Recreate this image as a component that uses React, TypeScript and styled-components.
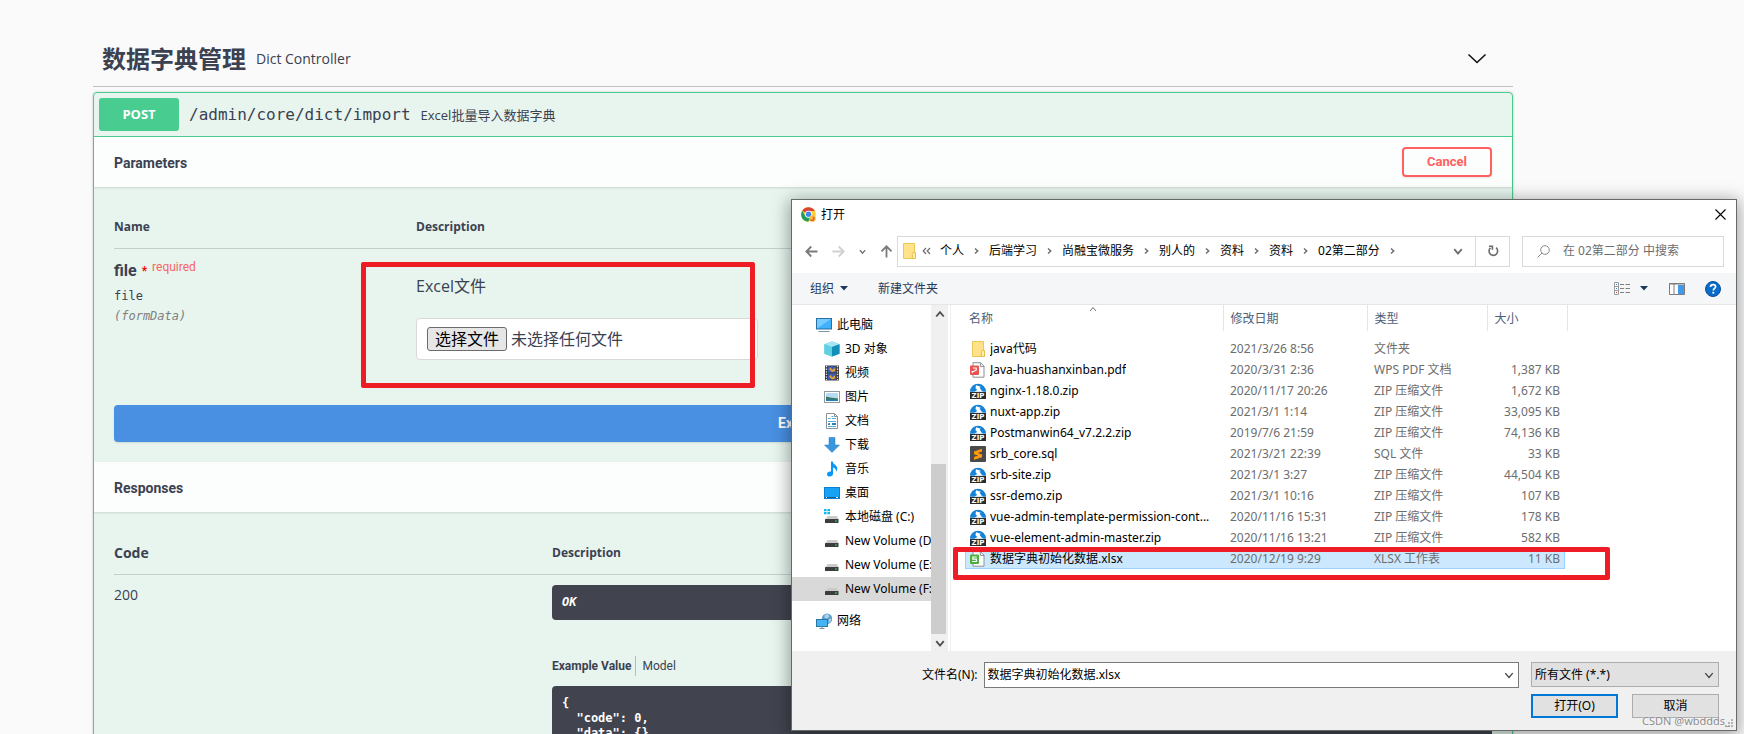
import React from "react";
import styled, { createGlobalStyle, css } from "styled-components";

const sans = '"Open Sans", "Noto Sans CJK SC", sans-serif';
const heading = 'Roboto, "Noto Sans CJK SC", sans-serif';
const mono = '"DejaVu Sans Mono", monospace';
const system = '"Noto Sans", "Noto Sans CJK SC", sans-serif';

const GlobalStyle = createGlobalStyle`
  *, *::before, *::after { box-sizing: border-box; }
  body { margin: 0; background: #fafafa; }
  button, input, select { font: inherit; color: inherit; margin: 0; padding: 0; }
  button { cursor: pointer; }
  a { color: inherit; text-decoration: none; }
  h2, h3, h4, p, pre, ul { margin: 0; padding: 0; }
  ul { list-style: none; }
  svg { display: block; flex: none; }
  table { border-collapse: collapse; table-layout: fixed; }
  th, td { padding: 0; text-align: left; vertical-align: top; }
`;

/* ---------- API documentation page ---------- */

const Screen = styled.div`
  position: relative;
  height: 100vh;
  overflow: hidden;
  background: #fafafa;
  color: #3b4151;
  font-family: ${sans};
`;

const Page = styled.main`
  position: relative;
  max-width: 1513px;
  padding: 32px 0 0 93px;
`;

const TagHeader = styled.header`
  display: flex;
  align-items: center;
  gap: 10px;
  height: 55px;
  padding: 0 26px 0 9px;
  border-bottom: 1px solid #bfc0c4;
`;

const TagTitle = styled.h2`
  font-size: 24px;
  line-height: 36px;
  font-weight: 700;
`;

const TagText = styled.p`
  flex: 1;
  font-size: 14px;
  line-height: 20px;
`;

const PlainButton = styled.button`
  display: flex;
  align-items: center;
  justify-content: center;
  border: 0;
  background: none;
`;

const Operation = styled.section`
  margin-top: 5px;
  border: 1px solid #49cc90;
  border-radius: 4px;
  background: #e7f5ee;
  box-shadow: 0 0 3px rgba(0, 0, 0, 0.19);
`;

const Summary = styled.div`
  display: flex;
  align-items: center;
  height: 44px;
  padding: 0 5px;
  border-bottom: 1px solid #49cc90;
`;

const Method = styled.span`
  width: 80px;
  border-radius: 3px;
  background: #49cc90;
  color: #fff;
  font: 700 13px/33px ${sans};
  text-align: center;
`;

const Path = styled.span`
  padding: 0 10px;
  font: 400 16px/24px ${mono};
`;

const SummaryText = styled.span`
  font-size: 13px;
  line-height: 20px;
`;

const Band = styled.div`
  display: flex;
  align-items: center;
  justify-content: space-between;
  height: 50px;
  padding: 0 20px;
  background: #fbfefc;
  box-shadow: 0 1px 2px rgba(0, 0, 0, 0.13);
`;

const BandTitle = styled.h4`
  padding-top: 2px;
  font: 700 14px/20px ${heading};
`;

const CancelButton = styled.button`
  width: 90px;
  height: 30px;
  border: 2px solid #ff6060;
  border-radius: 4px;
  background: transparent;
  box-shadow: 0 1px 2px rgba(0, 0, 0, 0.1);
  color: #ff6060;
  font: 700 13px/20px ${heading};
`;

const Body = styled.div`
  padding: 20px;
`;

const DocTable = styled.table`
  width: 100%;
`;

const DocTh = styled.th<{ $large?: boolean; $height?: number }>`
  height: ${(p) => p.$height ?? 41}px;
  border-bottom: 1px solid #c2d0cc;
  vertical-align: middle;
  font-size: ${(p) => (p.$large ? 14 : 12)}px;
  line-height: 20px;
`;

const DocTd = styled.td`
  padding-top: 10px;
`;

const ParamName = styled.div`
  display: flex;
  margin-bottom: 3px;
  font: 700 16px/24px ${heading};
`;

const Required = styled.span`
  margin-left: 5px;
  color: #ff0000;
  font: 700 12px/24px ${heading};
`;

const RequiredLabel = styled.sup`
  margin-left: 5px;
  color: #f76565;
  font: 400 12px/16px ${heading};
`;

const ParamType = styled.div<{ $muted?: boolean }>`
  font: ${(p) => (p.$muted ? "italic 400" : "400")} 12px/20px ${mono};
  color: ${(p) => (p.$muted ? "#808080" : "inherit")};
`;

const ParamText = styled.p`
  padding-top: 15px;
  font-size: 16px;
  line-height: 24px;
`;

const FileField = styled.div`
  display: flex;
  align-items: center;
  gap: 4px;
  width: 342px;
  height: 42px;
  margin: 20px 0 45px;
  padding: 0 10px;
  border: 1px solid #d9d9d9;
  border-radius: 4px;
  background: #fff;
  font-size: 16px;
  line-height: 22px;
`;

const HiddenFile = styled.input`
  position: absolute;
  width: 1px;
  height: 1px;
  opacity: 0;
`;

const FileButton = styled.label`
  padding: 0 7px;
  border: 1px solid #6b6b6b;
  border-radius: 3px;
  background: #e6e6e6;
  color: #000;
`;

const ExecuteButton = styled.button`
  display: block;
  width: 100%;
  height: 37px;
  border: 0;
  border-radius: 4px;
  background: #4990e2;
  box-shadow: 0 1px 2px rgba(0, 0, 0, 0.1);
  color: #fff;
  font: 700 14px/20px ${heading};
`;

const CodeBlock = styled.pre`
  padding: 10px;
  border-radius: 4px;
  background: #41444e;
  color: #fff;
  font: 700 12px/15px ${mono};
`;

const Tabs = styled.div`
  display: flex;
  margin: 36px 0 10px;
`;

const Tab = styled.button<{ $active?: boolean }>`
  height: 20px;
  padding: 0 4px 0 0;
  border: 0;
  background: none;
  font: ${(p) => (p.$active ? 700 : 400)} 12px/20px ${heading};

  & + & {
    padding: 0 0 0 6px;
    border-left: 1px solid #b4beb9;
  }
`;

/* Hand-placed red frames drawn over the content. */
const Marker = styled.div<{ $x: number; $y: number; $w: number; $h: number }>`
  position: absolute;
  left: ${(p) => p.$x}px;
  top: ${(p) => p.$y}px;
  width: ${(p) => p.$w}px;
  height: ${(p) => p.$h}px;
  border: 5px solid #ee1c25;
  border-radius: 2px;
  pointer-events: none;
`;

/* ---------- File dialog ---------- */

const Dialog = styled.div`
  position: absolute;
  top: 199px;
  left: 791px;
  right: 7px;
  display: flex;
  flex-direction: column;
  border: 1px solid #666a68;
  background: #fff;
  box-shadow: 0 3px 16px 2px rgba(0, 0, 0, 0.36);
  color: #000;
  font: 400 12px/18px ${system};
`;

const TitleBar = styled.div`
  display: flex;
  align-items: center;
  gap: 5px;
  height: 29px;
  padding: 0 10px 0 9px;
`;

const DialogTitle = styled.h3`
  flex: 1;
  font-size: 12px;
  line-height: 18px;
  font-weight: 400;
`;

const NavBar = styled.div`
  display: flex;
  align-items: center;
  height: 44px;
  padding: 0 12px 0 13px;
`;

const NavButtons = styled.div`
  display: flex;
  align-items: center;
  gap: 14px;
  width: 92px;
`;

const Address = styled.nav`
  display: flex;
  flex: 1;
  align-items: center;
  height: 31px;
  border: 1px solid #d9d9d9;
`;

const Crumbs = styled.div`
  display: flex;
  flex: 1;
  align-items: center;
  padding-left: 3px;
`;

const CrumbStart = styled.span`
  display: flex;
  align-items: center;
  gap: 5px;
  width: 39px;
`;

const Crumb = styled.a`
  display: flex;
  align-items: center;
  gap: 8px;
  padding-right: 9px;
`;

const AddressButton = styled(PlainButton)<{ $divided?: boolean }>`
  width: 34px;
  height: 29px;
  ${(p) => p.$divided && css`border-left: 1px solid #d9d9d9;`}
`;

const Search = styled.label`
  display: flex;
  align-items: center;
  gap: 13px;
  width: 202px;
  height: 31px;
  margin-left: 12px;
  padding-left: 14px;
  border: 1px solid #d9d9d9;
`;

const SearchInput = styled.input`
  width: 150px;
  border: 0;
  outline: 0;
  background: none;

  &::placeholder {
    color: #6d6d6d;
    opacity: 1;
  }
`;

const Toolbar = styled.div`
  display: flex;
  align-items: center;
  height: 32px;
  padding: 0 15px 0 18px;
  border-bottom: 1px solid #e4e6e9;
  background: #f5f6f7;
  color: #1e395b;
`;

const ToolButton = styled(PlainButton)<{ $after?: number }>`
  gap: 6px;
  margin-right: ${(p) => p.$after ?? 0}px;
`;

const Spacer = styled.span`
  flex: 1;
`;

const Panes = styled.div`
  display: flex;
  height: 346px;
`;

const Tree = styled.ul`
  width: 139px;
  padding-top: 8px;
`;

const TreeItem = styled.li<{ $selected?: boolean; $gap?: boolean }>`
  margin-top: ${(p) => (p.$gap ? 8 : 0)}px;
  background: ${(p) => (p.$selected ? "#d9d9d9" : "transparent")};
`;

const TreeLink = styled.a<{ $root?: boolean }>`
  display: flex;
  align-items: center;
  gap: 5px;
  height: 24px;
  padding-left: ${(p) => (p.$root ? 24 : 32)}px;
  overflow: hidden;
  white-space: nowrap;
`;

const ScrollBar = styled.div`
  display: flex;
  flex-direction: column;
  width: 17px;
  margin-right: 2px;
  background: #f0f0f0;
`;

const ScrollButton = styled(PlainButton)`
  height: 17px;
`;

const ScrollTrack = styled.div`
  display: flex;
  flex: 1;
  flex-direction: column;
  justify-content: flex-end;
`;

const ScrollThumb = styled.div`
  width: 15px;
  height: 170px;
  background: #cdcdcd;
`;

const Files = styled.div`
  position: relative;
  flex: 1;
  padding-left: 14px;
  border-left: 1px solid #f0f0f0;
`;

const FileTable = styled.table`
  width: 602px;
`;

const FileTh = styled.th`
  height: 26px;
  padding: 2px 0 0 7px;
  border-right: 1px solid #e5e5e5;
  color: #4c607a;
  font-weight: 400;
  vertical-align: middle;

  &:first-child {
    padding-left: 4px;
  }
`;

const SortMark = styled.span`
  position: absolute;
  top: 0;
  left: 138px;
`;

const FileTr = styled.tr<{ $selected?: boolean }>`
  height: 21px;

  ${(p) =>
    p.$selected &&
    css`
      td {
        background: #cce8ff;
        background-clip: padding-box;
        box-shadow: inset 0 -1px #99d1ff;
      }
      td:first-child {
        box-shadow: inset 1px -1px #99d1ff;
      }
      td:last-child {
        box-shadow: inset -1px -1px #99d1ff;
      }
    `}
`;

const FileTd = styled.td<{ $right?: boolean }>`
  padding-left: 7px;
  color: #6d6d6d;
  vertical-align: middle;
  white-space: nowrap;
  text-align: ${(p) => (p.$right ? "right" : "left")};

  &:first-child {
    padding-left: 5px;
    color: #000;
  }
  &:last-child {
    padding-right: 5px;
    border-right: 4px solid transparent;
  }
`;

const HeadGap = styled.tbody`
  height: 7px;
`;

const NameCell = styled.span`
  display: flex;
  align-items: center;
  gap: 4px;
  height: 20px;
  padding-right: 7px;
`;

const NameText = styled.span`
  overflow: hidden;
  text-overflow: ellipsis;
`;

const Footer = styled.div`
  display: grid;
  grid-template-columns: auto 1fr 188px;
  align-content: start;
  gap: 6px 0;
  height: 79px;
  padding: 11px 17px 0 130px;
  background: #f0f0f0;
`;

const FieldLabel = styled.label`
  align-self: center;
  padding-right: 6px;
`;

const Combo = styled.div`
  display: flex;
  height: 26px;
  margin-right: 12px;
  border: 1px solid #7a7a7a;
  background: #fff;
`;

const ComboInput = styled.input`
  flex: 1;
  padding-left: 3px;
  border: 0;
  outline: 0;
  background: none;
`;

const ComboButton = styled(PlainButton)`
  width: 18px;
`;

const SelectWrap = styled.div`
  display: grid;
  align-items: center;
  height: 25px;

  > * {
    grid-area: 1 / 1;
  }
  > svg {
    justify-self: end;
    margin-right: 5px;
    pointer-events: none;
  }
`;

const TypeSelect = styled.select`
  width: 100%;
  height: 25px;
  padding-left: 3px;
  border: 1px solid #adadad;
  border-radius: 0;
  background: #e1e1e1;
  appearance: none;
`;

const Actions = styled.div`
  grid-column: 3;
  display: grid;
  grid-template-columns: 1fr 1fr;
  gap: 14px;
`;

const DialogButton = styled.button<{ $primary?: boolean }>`
  height: 24px;
  border: ${(p) => (p.$primary ? "2px solid #0078d7" : "1px solid #adadad")};
  background: #e1e1e1;
`;

const Grip = styled.span`
  position: absolute;
  right: 2px;
  bottom: 2px;
`;

const Watermark = styled.span`
  position: absolute;
  right: 14px;
  bottom: 4px;
  color: #8c8c8c;
  font: 400 11px/18px ${system};
  text-shadow: 0 0 2px #fff;
`;

/* ---------- Icons ---------- */

type ChevronProps = { dir?: "up" | "down" | "right"; size?: number; color?: string; weight?: number };

const Chevron = ({ dir = "down", size = 8, color = "#6d6d6d", weight = 1.5 }: ChevronProps) => {
  const d = { up: "M1 6l3-3.5L7 6", down: "M1 2.5L4 6l3-3.5", right: "M3 1.5L5.7 4 3 6.5" }[dir];
  return (
    <svg width={size} height={size} viewBox="0 0 8 8" fill="none" stroke={color} strokeWidth={weight}>
      <path d={d} />
    </svg>
  );
};

const Arrow = ({ turn = 0, color = "#7a7a7a" }: { turn?: number; color?: string }) => (
  <svg width="13" height="13" viewBox="0 0 13 13" fill="none" stroke={color} strokeWidth="1.8">
    <path d="M12.5 6.5H1.5M6.3 1.5l-5 5 5 5" transform={`rotate(${turn} 6.5 6.5)`} />
  </svg>
);

const Triangle = () => (
  <svg width="8" height="5" viewBox="0 0 8 5">
    <path d="M0 0h8L4 4.5z" fill="#1e395b" />
  </svg>
);

const ChromeIcon = () => (
  <svg width="15" height="15" viewBox="0 0 16 16">
    <circle cx="8" cy="8" r="7.8" fill="#fbcf3a" />
    <path d="M8 8L1.3 4A7.8 7.8 0 0 1 14.8 4.2H8z" fill="#dc4437" />
    <path d="M1.3 4A7.8 7.8 0 0 0 7.4 15.8L11.2 9.8 8 8 4.7 9.8z" fill="#1a9f58" />
    <circle cx="8" cy="7.8" r="3.8" fill="#fff" />
    <circle cx="8" cy="7.8" r="2.9" fill="#4285f4" />
    <circle cx="12.4" cy="12.3" r="3.4" fill="#fbbf45" />
    <path d="M12.5 10.3l1.5 1.5-1 2.5-3-.5" fill="none" stroke="#d9632b" strokeWidth="1.5" />
  </svg>
);

const FolderIcon = () => (
  <svg width="16" height="16" viewBox="0 0 16 16">
    <path d="M2.5.5h11v15h-11z" fill="#ffe28a" stroke="#e9c955" />
    <path d="M12.3 9.5h2.2v6h-3.2v-4z" fill="#fff0b8" stroke="#e3bd3f" />
  </svg>
);

const PdfIcon = () => (
  <svg width="16" height="16" viewBox="0 0 16 16">
    <path d="M3 .7h7.5L14 4.2v11H3z" fill="#fff" stroke="#8b8f93" />
    <path d="M10.3.7v3.7H14" fill="none" stroke="#8b8f93" />
    <rect y="3.5" width="9" height="9.5" rx="1" fill="#ea5454" />
    <path d="M3 6h3.2v2.2L3.5 9.5H2.2v1.5" fill="none" stroke="#fff" strokeWidth="1.1" />
  </svg>
);

const ZipIcon = () => (
  <svg width="16" height="16" viewBox="0 0 16 16">
    <path d="M0 8.7a8 8 0 0 1 16 0z" fill="#1583d8" />
    <path d="M6 2.2l4.8 1.6-1.2 1 2.3 3.3 1.6.6H4.2L7.3 7 5.5 5.2z" fill="#fff" />
    <rect y="9" width="16" height="7" fill="#2b2b2b" />
    <text x="8" y="15" fill="#fff" fontSize="7" fontWeight="700" fontFamily="DejaVu Sans" textAnchor="middle">
      ZIP
    </text>
  </svg>
);

const SqlIcon = () => (
  <svg width="16" height="16" viewBox="0 0 16 16">
    <rect width="16" height="16" rx="1" fill="#4a4a4a" />
    <path d="M12 2.8v2.8L7.8 7 12 8.4v2.8l-8 2.6V11l4.2-1.4L4 8.2V5.4z" fill="#ff9a0a" />
  </svg>
);

const XlsxIcon = () => (
  <svg width="16" height="16" viewBox="0 0 16 16">
    <path d="M3 .7h7.5L14 4.2v11H3z" fill="#fff" stroke="#8b8f93" />
    <path d="M10.3.7v3.7H14" fill="none" stroke="#8b8f93" />
    <rect y="3.5" width="9" height="9.5" rx="1" fill="#4caf3f" />
    <path d="M6.8 6H2.8v2.2h3.6v2.3H2.2" fill="none" stroke="#fff" strokeWidth="1.2" />
  </svg>
);

const ComputerIcon = () => (
  <svg width="16" height="16" viewBox="0 0 16 16">
    <rect x=".5" y="1.5" width="15" height="10.5" fill="#3fb2fb" stroke="#2b6f9e" />
    <path d="M1 2h14L1 11.5z" fill="#74cbff" />
    <path d="M2.5 14.5h11" stroke="#7d94a6" />
  </svg>
);

const CubeIcon = () => (
  <svg width="16" height="16" viewBox="0 0 16 16">
    <path d="M8 .5l7.5 2.7v9.6L8 15.5.5 12.8V3.2z" fill="#2bb5d6" />
    <path d="M8 .5l7.5 2.7L8 6 .5 3.2z" fill="#a5e6f2" />
    <path d="M8 6v9.5l7.5-2.7V3.2z" fill="#128fb8" />
    <path d="M.5 3.2L8 6v9.5L.5 12.8z" fill="#5fd0e2" />
  </svg>
);

const VideoIcon = () => (
  <svg width="16" height="16" viewBox="0 0 16 16">
    <rect x="1" y=".5" width="14" height="15" fill="#3a3a3a" />
    <path d="M2.5 1v14M13.5 1v14" stroke="#e8e8e8" strokeWidth="1.3" strokeDasharray="1.3 1.3" />
    <rect x="4" y="1.5" width="8" height="6" fill="#3b5fb5" />
    <rect x="4" y="8.5" width="8" height="6" fill="#3b5fb5" />
    <path d="M5 4l2-1.5 1 2.5 3-2v3l-3 1zM5 11.5l2-1.5 1 2.5 3-2v3l-3 1z" fill="#e9a23a" />
  </svg>
);

const PictureIcon = () => (
  <svg width="16" height="16" viewBox="0 0 16 16">
    <rect x=".5" y="2.5" width="15" height="11" fill="#fff" stroke="#8e9aa3" />
    <rect x="2" y="4" width="12" height="8" fill="#b7dcf2" />
    <path d="M2 7.5l4 1 8 1V12H2z" fill="#37775b" />
    <path d="M2 10.5h12V12H2z" fill="#2a7fb9" />
  </svg>
);

const DocIcon = () => (
  <svg width="16" height="16" viewBox="0 0 16 16">
    <path d="M2.5.5h8l3 3v12h-11z" fill="#fff" stroke="#8b9196" />
    <path d="M10.5.5v3h3" fill="none" stroke="#8b9196" />
    <path d="M7.5 3.5h2M4 5.5h2.5M8 5.5h4M4 8.5h8M4 13.5h8" stroke="#4fb0dc" />
    <path d="M4 10.5l2-.5v2H4zM8 10h4v2H8z" fill="#2d7fb5" />
  </svg>
);

const DownloadIcon = () => (
  <svg width="16" height="16" viewBox="0 0 16 16">
    <path d="M5 .5h6v7.500h4.500L8 15.500.5 8H5z" fill="#3a96dd" stroke="#2a7cc0" strokeWidth=".5" />
  </svg>
);

const MusicIcon = () => (
  <svg width="16" height="16" viewBox="0 0 16 16">
    <path
      d="M7 .5h1.800c.3 3 4.500 3.600 4.500 7 0 1.300-.6 2.400-1.300 3.200.3-2.400-1-3.700-3-4.200v6.200c0 1.800-1.500 2.800-3.200 2.800S3 14.600 3 13.200c0-1.800 2-3 4-2.600z"
      fill="#0a96f5"
    />
  </svg>
);

const DesktopIcon = () => (
  <svg width="16" height="16" viewBox="0 0 16 16">
    <rect x=".5" y="2.5" width="15" height="11" fill="#18a2f6" stroke="#0d7fd0" />
    <path d="M1 12.5h14" stroke="#0b5fa8" />
    <path d="M2 12.5h1M12 12.5h2" stroke="#fff" />
  </svg>
);

const DriveIcon = ({ system: isSystem }: { system?: boolean }) => (
  <svg width="16" height="16" viewBox="0 0 16 16">
    {isSystem && <path d="M0 0h2.600v2.200H0zM3.400 0H6v2.200H3.400zM0 3h2.600v2.200H0zM3.400 3H6v2.200H3.400z" fill="#16b5ef" />}
    <path d="M3.500 7h9.500l1.700 3.500H1.300z" fill="#cbcbcb" />
    <rect x="1" y="10" width="13.500" height="4" rx=".5" fill="#3d3d3d" />
    <rect x="11" y="11.500" width="2" height="1" fill="#35e06b" />
  </svg>
);

const NetworkIcon = () => (
  <svg width="16" height="16" viewBox="0 0 16 16">
    <circle cx="11" cy="5.800" r="5.200" fill="#5c9dc6" />
    <path d="M8.500 2l3-1 2 2-2 2.500-3-.5zM13 6l2.500-.5-1 3.500-2 .5z" fill="#a9d4ec" />
    <rect x=".5" y="6.500" width="11" height="7" fill="#45b4f5" stroke="#2877a8" />
    <path d="M3.500 15.500h5M6 13.500v2" stroke="#7893a5" />
  </svg>
);

const RefreshIcon = () => (
  <svg width="12" height="12" viewBox="0 0 12 12" fill="none" stroke="#6d6d6d" strokeWidth="1.600">
    <path d="M9 2.700a4.300 4.300 0 1 1-5.600.2" />
    <path d="M2 1.200h3.400v3.500" />
  </svg>
);

const ViewIcon = () => (
  <svg width="16" height="13" viewBox="0 0 16 13">
    <path d="M.5.5h4v12h-4zM.5 4.500h4M.5 8.500h4" fill="#fff" stroke="#9a9a9a" />
    <path d="M2 2.500h1M2 6.500h1" stroke="#3b82c4" />
    <path d="M2 10.500h1" stroke="#d02c2c" />
    <path d="M6 2.500h4M11.500 2.500H16M6 6.500h4M11.500 6.500H16M6 10.500h4M11.500 10.500H16" stroke="#808080" />
  </svg>
);

const PaneIcon = () => (
  <svg width="16" height="12" viewBox="0 0 16 12">
    <path d="M.5.5h15v11H.5z" fill="#fff" stroke="#7d7d7d" />
    <path d="M0 1h16M5 1v10" stroke="#7d7d7d" />
    <rect x="9" y="2" width="6" height="9" fill="#3f9be8" />
  </svg>
);

const HelpIcon = () => (
  <svg width="16" height="16" viewBox="0 0 16 16">
    <circle cx="8" cy="8" r="7.500" fill="#0a6cc9" stroke="#07509a" />
    <path d="M5.500 6c0-1.500 1-2.400 2.600-2.400 1.500 0 2.500.8 2.500 2.100 0 1.700-2.300 1.800-2.300 3.800" fill="none" stroke="#fff" strokeWidth="1.600" />
    <rect x="7.400" y="10.800" width="1.800" height="1.800" fill="#fff" />
  </svg>
);

const SearchIcon = () => (
  <svg width="13" height="13" viewBox="0 0 13 13" fill="none" stroke="#8a8a8a">
    <circle cx="8" cy="5" r="4.300" />
    <path d="M5 8L.5 12.500" />
  </svg>
);

const CloseIcon = () => (
  <svg width="11" height="11" viewBox="0 0 11 11" stroke="#000" strokeWidth="1.100">
    <path d="M.5.5l10 10M10.500.5l-10 10" />
  </svg>
);

/* ---------- Data ---------- */

const crumbs = ["个人", "后端学习", "尚融宝微服务", "别人的", "资料", "资料", "02第二部分"];

const places = [
  { label: "此电脑", icon: <ComputerIcon />, root: true },
  { label: "3D 对象", icon: <CubeIcon /> },
  { label: "视频", icon: <VideoIcon /> },
  { label: "图片", icon: <PictureIcon /> },
  { label: "文档", icon: <DocIcon /> },
  { label: "下载", icon: <DownloadIcon /> },
  { label: "音乐", icon: <MusicIcon /> },
  { label: "桌面", icon: <DesktopIcon /> },
  { label: "本地磁盘 (C:)", icon: <DriveIcon system /> },
  { label: "New Volume (D:)", icon: <DriveIcon /> },
  { label: "New Volume (E:)", icon: <DriveIcon /> },
  { label: "New Volume (F:)", icon: <DriveIcon />, selected: true },
  { label: "网络", icon: <NetworkIcon />, root: true, gap: true },
];

const ZIP = "ZIP 压缩文件";
const selectedFile = "数据字典初始化数据.xlsx";

const files: [string, string, string, string, () => React.ReactElement][] = [
  ["java代码", "2021/3/26 8:56", "文件夹", "", FolderIcon],
  ["Java-huashanxinban.pdf", "2020/3/31 2:36", "WPS PDF 文档", "1,387 KB", PdfIcon],
  ["nginx-1.18.0.zip", "2020/11/17 20:26", ZIP, "1,672 KB", ZipIcon],
  ["nuxt-app.zip", "2021/3/1 1:14", ZIP, "33,095 KB", ZipIcon],
  ["Postmanwin64_v7.2.2.zip", "2019/7/6 21:59", ZIP, "74,136 KB", ZipIcon],
  ["srb_core.sql", "2021/3/21 22:39", "SQL 文件", "33 KB", SqlIcon],
  ["srb-site.zip", "2021/3/1 3:27", ZIP, "44,504 KB", ZipIcon],
  ["ssr-demo.zip", "2021/3/1 10:16", ZIP, "107 KB", ZipIcon],
  ["vue-admin-template-permission-cont...", "2020/11/16 15:31", ZIP, "178 KB", ZipIcon],
  ["vue-element-admin-master.zip", "2020/11/16 13:21", ZIP, "582 KB", ZipIcon],
  [selectedFile, "2020/12/19 9:29", "XLSX 工作表", "11 KB", XlsxIcon],
];

const exampleValue = `{
  "code": 0,
  "data": {},
  "message": "string"
}`;

/* ---------- Views ---------- */

const ApiPage = () => (
  <Page>
    <TagHeader>
      <TagTitle>数据字典管理</TagTitle>
      <TagText>Dict Controller</TagText>
      <PlainButton aria-label="Collapse">
        <svg width="20" height="20" viewBox="0 0 20 20" fill="none" stroke="#111" strokeWidth="1.600">
          <path d="M1.500 5.500l8.500 8 8.500-8" />
        </svg>
      </PlainButton>
    </TagHeader>

    <Operation>
      <Summary>
        <Method>POST</Method>
        <Path>/admin/core/dict/import</Path>
        <SummaryText>Excel批量导入数据字典</SummaryText>
      </Summary>

      <Band>
        <BandTitle>Parameters</BandTitle>
        <CancelButton>Cancel</CancelButton>
      </Band>
      <Body>
        <DocTable>
          <colgroup>
            <col style={{ width: 302 }} />
            <col />
          </colgroup>
          <thead>
            <tr>
              <DocTh>Name</DocTh>
              <DocTh>Description</DocTh>
            </tr>
          </thead>
          <tbody>
            <tr>
              <DocTd>
                <ParamName>
                  file<Required>*</Required>
                  <RequiredLabel>required</RequiredLabel>
                </ParamName>
                <ParamType>file</ParamType>
                <ParamType $muted>(formData)</ParamType>
              </DocTd>
              <DocTd>
                <ParamText>Excel文件</ParamText>
                <FileField>
                  <HiddenFile type="file" id="excel-file" />
                  <FileButton htmlFor="excel-file">选择文件</FileButton>
                  <span>未选择任何文件</span>
                </FileField>
              </DocTd>
            </tr>
          </tbody>
        </DocTable>
        <ExecuteButton>Execute</ExecuteButton>
      </Body>

      <Band>
        <BandTitle>Responses</BandTitle>
      </Band>
      <Body>
        <DocTable>
          <colgroup>
            <col style={{ width: 438 }} />
            <col />
          </colgroup>
          <thead>
            <tr>
              <DocTh $large $height={43}>Code</DocTh>
              <DocTh $height={43}>Description</DocTh>
            </tr>
          </thead>
          <tbody>
            <tr>
              <DocTd>
                <TagText>200</TagText>
              </DocTd>
              <DocTd>
                <CodeBlock>
                  <em>OK</em>
                </CodeBlock>
                <Tabs>
                  <Tab $active>Example Value</Tab>
                  <Tab>Model</Tab>
                </Tabs>
                <CodeBlock>{exampleValue}</CodeBlock>
              </DocTd>
            </tr>
          </tbody>
        </DocTable>
      </Body>
    </Operation>
    <Marker $x={361} $y={262} $w={394} $h={126} />
  </Page>
);

const FileList = () => (
  <Files>
    <FileTable>
      <colgroup>
        <col style={{ width: 258 }} />
        <col style={{ width: 144 }} />
        <col style={{ width: 120 }} />
        <col style={{ width: 80 }} />
      </colgroup>
      <thead>
        <tr>
          <FileTh>名称</FileTh>
          <FileTh>修改日期</FileTh>
          <FileTh>类型</FileTh>
          <FileTh>大小</FileTh>
        </tr>
      </thead>
      <HeadGap>
        <tr style={{ height: 7 }} />
      </HeadGap>
      <tbody>
        {files.map(([name, date, type, size, Icon]) => (
          <FileTr key={name} $selected={name === selectedFile}>
            <FileTd>
              <NameCell>
                <Icon />
                <NameText>{name}</NameText>
              </NameCell>
            </FileTd>
            <FileTd>{date}</FileTd>
            <FileTd>{type}</FileTd>
            <FileTd $right>{size}</FileTd>
          </FileTr>
        ))}
      </tbody>
    </FileTable>
    <SortMark>
      <Chevron dir="up" weight={1} />
    </SortMark>
    <Marker $x={2} $y={242} $w={657} $h={33} />
  </Files>
);

const OpenDialog = () => (
  <Dialog role="dialog" aria-labelledby="dialog-title">
    <TitleBar>
      <ChromeIcon />
      <DialogTitle id="dialog-title">打开</DialogTitle>
      <PlainButton aria-label="关闭">
        <CloseIcon />
      </PlainButton>
    </TitleBar>

    <NavBar>
      <NavButtons>
        <PlainButton aria-label="后退"><Arrow /></PlainButton>
        <PlainButton aria-label="前进"><Arrow turn={180} color="#d0d0d0" /></PlainButton>
        <PlainButton aria-label="最近"><Chevron size={7} /></PlainButton>
        <PlainButton aria-label="向上"><Arrow turn={90} /></PlainButton>
      </NavButtons>
      <Address>
        <Crumbs>
          <CrumbStart>
            <FolderIcon />
            <svg width="9" height="8" viewBox="0 0 9 8" fill="none" stroke="#6d6d6d" strokeWidth="1.200">
              <path d="M4 1L1.200 4 4 7M8 1L5.200 4 8 7" />
            </svg>
          </CrumbStart>
          {crumbs.map((name, i) => (
            <Crumb href="#" key={i}>
              {name}
              <Chevron dir="right" />
            </Crumb>
          ))}
        </Crumbs>
        <AddressButton aria-label="历史"><Chevron size={10} weight={1.5} /></AddressButton>
        <AddressButton $divided aria-label="刷新"><RefreshIcon /></AddressButton>
      </Address>
      <Search>
        <SearchIcon />
        <SearchInput placeholder="在 02第二部分 中搜索" />
      </Search>
    </NavBar>

    <Toolbar>
      <ToolButton $after={30}>组织<Triangle /></ToolButton>
      <ToolButton>新建文件夹</ToolButton>
      <Spacer />
      <ToolButton $after={10} aria-label="视图"><ViewIcon /></ToolButton>
      <ToolButton $after={21} aria-label="更多视图"><Triangle /></ToolButton>
      <ToolButton $after={20} aria-label="预览窗格"><PaneIcon /></ToolButton>
      <ToolButton aria-label="帮助"><HelpIcon /></ToolButton>
    </Toolbar>

    <Panes>
      <Tree>
        {places.map((p) => (
          <TreeItem key={p.label} $selected={p.selected} $gap={p.gap}>
            <TreeLink href="#" $root={p.root}>
              {p.icon}
              {p.label}
            </TreeLink>
          </TreeItem>
        ))}
      </Tree>
      <ScrollBar>
        <ScrollButton aria-label="向上滚动"><Chevron dir="up" size={10} color="#505050" weight={1.5} /></ScrollButton>
        <ScrollTrack>
          <ScrollThumb />
        </ScrollTrack>
        <ScrollButton aria-label="向下滚动"><Chevron size={10} color="#505050" weight={1.5} /></ScrollButton>
      </ScrollBar>
      <FileList />
    </Panes>

    <Footer>
      <FieldLabel htmlFor="file-name">文件名(N):</FieldLabel>
      <Combo>
        <ComboInput id="file-name" defaultValue={selectedFile} />
        <ComboButton aria-label="展开"><Chevron size={10} weight={1} color="#404040" /></ComboButton>
      </Combo>
      <SelectWrap>
        <TypeSelect aria-label="文件类型">
          <option>所有文件 (*.*)</option>
        </TypeSelect>
        <Chevron size={10} weight={1} color="#404040" />
      </SelectWrap>
      <Actions>
        <DialogButton $primary>打开(O)</DialogButton>
        <DialogButton>取消</DialogButton>
      </Actions>
    </Footer>
    <Grip>
      <svg width="10" height="10" viewBox="0 0 10 10" fill="#b5b5b5">
        <path d="M7 1h2v2H7zM4 4h2v2H4zM7 4h2v2H7zM1 7h2v2H1zM4 7h2v2H4zM7 7h2v2H7z" />
      </svg>
    </Grip>
  </Dialog>
);

export default function App() {
  return (
    <Screen>
      <GlobalStyle />
      <ApiPage />
      <OpenDialog />
      <Watermark>CSDN @wbddds_</Watermark>
    </Screen>
  );
}
